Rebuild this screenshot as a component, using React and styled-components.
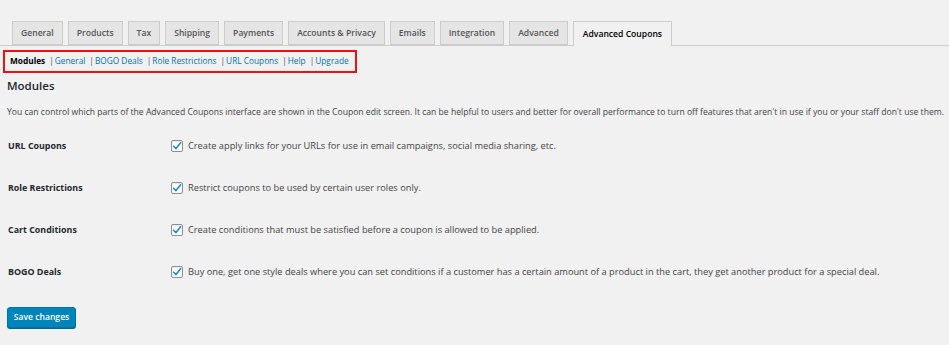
import React from "react";
import styled, { createGlobalStyle } from "styled-components";

const Global = createGlobalStyle`
  html, body { margin: 0; padding: 0; background: #f1f1f1; }
  body { font-family: "Open Sans", "Noto Sans", sans-serif; color: #444; }
  * { box-sizing: border-box; }
`;

const Page = styled.div`
  width: 949px;
  height: 345px;
  overflow: hidden;
  background: #f1f1f1;
`;

const TabBar = styled.nav`
  display: flex;
  align-items: flex-end;
  gap: 5px;
  padding: 21px 0 0 12px;
  border-bottom: 1px solid #ccc;
  height: 46px;
`;

const Tab = styled.div`
  display: flex;
  align-items: center;
  height: ${(p) => (p.$active ? "25px" : "24px")};
  margin-bottom: ${(p) => (p.$active ? "-1px" : "0")};
  padding: 0 ${(p) => p.$pad || 8}px;
  border: 1px solid #ccc;
  border-bottom: ${(p) => (p.$active ? "none" : "1px solid #ccc")};
  background: ${(p) => (p.$active ? "#f1f1f1" : "#e5e5e5")};
  color: ${(p) => (p.$active ? "#000" : "#555")};
  font-size: 8.6px;
  font-weight: 600;
  white-space: nowrap;
`;

const Content = styled.div`
  padding: 1px 0 0 7px;
`;

const SubNav = styled.div`
  display: inline-flex;
  align-items: center;
  margin-left: -4px;
  height: 23px;
  padding: 0 6px 1px 5px;
  border: 2px solid #ee1111;
  font-size: 8.3px;
  white-space: nowrap;
`;

const Current = styled.span`
  color: #000;
  font-weight: 700;
`;

const Sep = styled.span`
  color: #555;
  margin: 0 1px 0 4px;
`;

const NavLink = styled.a`
  color: #0073aa;
  text-decoration: none;
`;

const Heading = styled.h2`
  margin: 5px 0 0;
  font-size: 11.5px;
  font-weight: 600;
  color: #23282d;
  line-height: 16px;
`;

const Description = styled.p`
  margin: 12px 0 0;
  font-size: 8.6px;
  line-height: 12px;
  color: #444;
  white-space: nowrap;
`;

const Form = styled.div`
  display: grid;
  grid-template-columns: 164px 1fr;
  grid-auto-rows: 42px;
  margin-top: 7px;
  align-items: center;
`;

const Label = styled.div`
  font-size: 8.9px;
  font-weight: 700;
  color: #23282d;
  padding-left: 1px;
`;

const Option = styled.label`
  display: flex;
  align-items: center;
  gap: 5px;
  font-size: 9.25px;
  color: #444;
  white-space: nowrap;
`;

const Box = styled.span`
  display: inline-flex;
  align-items: center;
  justify-content: center;
  flex: none;
  width: 12px;
  height: 12px;
  border: 1px solid #8c8f94;
  border-radius: 2px;
  background: #fff;
  box-shadow: inset 0 1px 2px rgba(0,0,0,0.1);
`;

const SaveButton = styled.button`
  margin-top: 14px;
  height: 21px;
  width: 69px;
  padding: 0;
  border: 1px solid #0073aa;
  border-radius: 3px;
  background: #0085ba;
  color: #fff;
  font-family: inherit;
  font-size: 8.6px;
  font-weight: 600;
  box-shadow: 0 1px 0 #006799;
`;

const tabs = [
  "General",
  "Products",
  "Tax",
  "Shipping",
  "Payments",
  "Accounts & Privacy",
  "Emails",
  "Integration",
  "Advanced",
];

const links = ["General", "BOGO Deals", "Role Restrictions", "URL Coupons", "Help", "Upgrade"];

const rows = [
  ["URL Coupons", "Create apply links for your URLs for use in email campaigns, social media sharing, etc."],
  ["Role Restrictions", "Restrict coupons to be used by certain user roles only."],
  ["Cart Conditions", "Create conditions that must be satisfied before a coupon is allowed to be applied."],
  ["BOGO Deals", "Buy one, get one style deals where you can set conditions if a customer has a certain amount of a product in the cart, they get another product for a special deal."],
];

const Check = () => (
  <Box>
    <svg width="10" height="10" viewBox="0 0 10 10">
      <path d="M1.6 5.2 L4 7.6 L8.6 1.8" fill="none" stroke="#1e8cbe" strokeWidth="1.6" strokeLinecap="round" strokeLinejoin="round" />
    </svg>
  </Box>
);

export default function App() {
  return (
    <Page>
      <Global />
      <TabBar>
        {tabs.map((t) => (
          <Tab key={t}>{t}</Tab>
        ))}
        <Tab $active $pad={9}>Advanced Coupons</Tab>
      </TabBar>
      <Content>
        <SubNav>
          <Current>Modules</Current>
          {links.map((l) => (
            <React.Fragment key={l}>
              <Sep>|</Sep>
              <NavLink href="#">{l}</NavLink>
            </React.Fragment>
          ))}
        </SubNav>
        <Heading>Modules</Heading>
        <Description>
          You can control which parts of the Advanced Coupons interface are shown in the Coupon edit screen. It can be helpful to users and better for overall performance to turn off features that aren't in use if you or your staff don't use them.
        </Description>
        <Form>
          {rows.map(([label, text]) => (
            <React.Fragment key={label}>
              <Label>{label}</Label>
              <Option>
                <Check />
                {text}
              </Option>
            </React.Fragment>
          ))}
        </Form>
        <SaveButton>Save changes</SaveButton>
      </Content>
    </Page>
  );
}
